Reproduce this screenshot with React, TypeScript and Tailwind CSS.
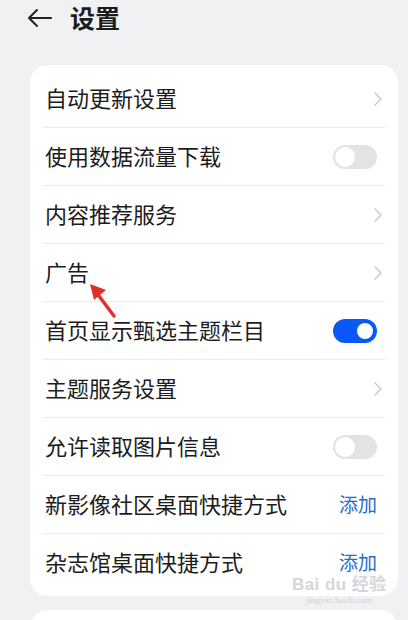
type Row = { label: string; kind: "chevron" | "off" | "on" | "add" };

const rows: Row[] = [
  { label: "自动更新设置", kind: "chevron" },
  { label: "使用数据流量下载", kind: "off" },
  { label: "内容推荐服务", kind: "chevron" },
  { label: "广告", kind: "chevron" },
  { label: "首页显示甄选主题栏目", kind: "on" },
  { label: "主题服务设置", kind: "chevron" },
  { label: "允许读取图片信息", kind: "off" },
  { label: "新影像社区桌面快捷方式", kind: "add" },
  { label: "杂志馆桌面快捷方式", kind: "add" },
];

function Toggle({ on }: { on: boolean }) {
  if (on) {
    return (
      <div className="w-[44px] h-[24px] rounded-full bg-[#0a59f7] flex items-center justify-end pr-[2px]">
        <div className="w-[20px] h-[20px] rounded-full bg-white border-2 border-[#0a59f7]" />
      </div>
    );
  }
  return (
    <div className="w-[44px] h-[24px] rounded-full bg-[#e3e3e3] flex items-center pl-[2px]">
      <div className="w-[20px] h-[20px] rounded-full bg-white" />
    </div>
  );
}

function Chevron() {
  return (
    <svg width="8" height="14" viewBox="0 0 8 14" fill="none" stroke="#c6c6c6" strokeWidth="1.4" strokeLinecap="round" strokeLinejoin="round" className="-mr-[5px]">
      <path d="M1 1l6 6-6 6" />
    </svg>
  );
}

export default function App() {
  return (
    <div
      className="relative w-[408px] h-[620px] overflow-hidden bg-[#eff1f3] text-[#1c1c1c]"
      style={{ fontFamily: '"Noto Sans CJK SC", "Noto Sans", sans-serif' }}
    >
      {/* header */}
      <div className="h-[36px] flex items-center pl-[27px]">
        <svg width="26" height="20" viewBox="0 0 26 20" fill="none" stroke="#222" strokeWidth="2" strokeLinecap="round" strokeLinejoin="round">
          <path d="M24 10H2M10 2L2 10l8 8" />
        </svg>
        <span className="ml-[17px] text-[25px] font-bold leading-none pb-[2px]">设置</span>
      </div>

      {/* settings card */}
      <div className="mt-[29px] mx-[30px] w-[368px] bg-white rounded-[18px] pt-[5px] pb-[4px]">
        {rows.map((r, i) => (
          <div key={r.label} className="px-[13px]">
            <div
              className={
                "h-[58px] flex items-center justify-between pl-[2px] pr-[8px] " +
                (i < rows.length - 1 ? "border-b border-[#ececec]" : "")
              }
            >
              <span className="text-[22px] leading-none pb-[4px]">{r.label}</span>
              {r.kind === "chevron" && <Chevron />}
              {r.kind === "off" && <Toggle on={false} />}
              {r.kind === "on" && <Toggle on />}
              {r.kind === "add" && <span className="text-[19px] leading-none text-[#2a6cc4] pb-[3px]">添加</span>}
            </div>
          </div>
        ))}
      </div>

      {/* next card peeking */}
      <div className="mt-[14px] mx-[30px] w-[368px] h-[40px] bg-white rounded-[18px]" />

      {/* red annotation arrow */}
      <svg className="absolute left-[84px] top-[280px]" width="40" height="42" viewBox="0 0 40 42">
        <path d="M30 36L12 12" stroke="#e0302a" strokeWidth="3.5" strokeLinecap="round" />
        <path d="M6 4L22 10L10 20Z" fill="#e0302a" />
      </svg>

      {/* watermark */}
      <div className="absolute left-[292px] top-[576px] flex flex-col items-center text-[#c9ced4] opacity-80 leading-none">
        <span className="text-[17px] font-bold tracking-wide" style={{ fontFamily: '"Liberation Sans", "Noto Sans CJK SC", sans-serif' }}>Bai du 经验</span>
        <span className="text-[9px] mt-[3px]" style={{ fontFamily: '"Liberation Serif", serif' }}>jingyan.baidu.com</span>
      </div>
    </div>
  );
}
